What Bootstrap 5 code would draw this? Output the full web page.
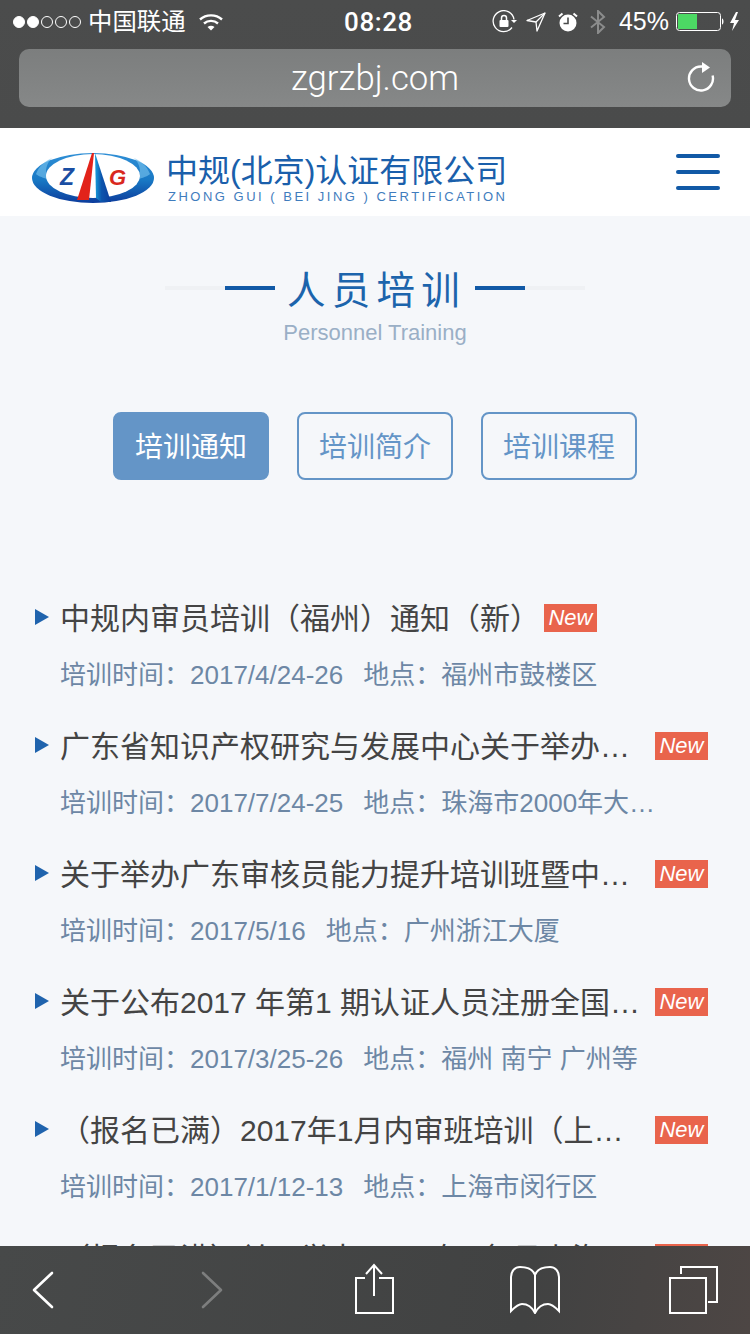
<!DOCTYPE html>
<html lang="zh-CN">
<head>
  <meta charset="UTF-8">
  <title>人员培训</title>
  <link href="https://cdn.jsdelivr.net/npm/bootstrap@5.3.3/dist/css/bootstrap.min.css" rel="stylesheet">
  <style>
    body {
      width: 750px;
      height: 1334px;
      overflow: hidden;
      background-color: #f5f7fa;
      font-family: "Liberation Sans", "Noto Sans CJK SC", sans-serif;
    }
    .phone { width: 750px; height: 1334px; }

    .safari-top { height: 128px; background: linear-gradient(180deg, #4b4c4c, #4a4b4b); color: #fff; }
    .status-row { height: 44px; padding: 0 8px 0 13px; display: grid; grid-template-columns: 1fr auto 1fr; align-items: center; font-size: 24px; }
    .dots { gap: 2px; }
    .dot { width: 12px; height: 12px; border: 1px solid #fff; border-radius: 50%; }
    .dot-on { background: #fff; }
    .carrier { margin-left: 7px; margin-right: 13px; line-height: 1; font-size: 24.4px; }
    .clock { font-family: Roboto, sans-serif; font-size: 26px; font-weight: 500; letter-spacing: .6px; margin-left: 2px; }
    .pct { font-size: 25px; margin: 0 7px 0 13px; }
    .url-box { height: 58px; margin: 5px 19px 0; padding: 0 16px 0 0; border-radius: 10px; background: linear-gradient(180deg, #7c7e7e, #868888); }
    .url-text { font-family: Roboto, sans-serif; font-weight: 300; font-size: 34.7px; line-height: 1; padding-left: 44px; }

    .site-head { height: 88px; background: #fff; padding: 0 30px 0 31px; }
    .logo-svg { margin-top: 12px; }
    .brand-text { margin-left: 9px; padding-top: 13px; }
    .brand-cn { font-size: 32px; line-height: 36px; font-weight: 400; color: #1a5fab; white-space: nowrap; }
    .brand-en { font-size: 13px; line-height: 14px; color: #3f7cbd; letter-spacing: 2.5px; white-space: nowrap; margin: 1px 0 0 2px; }
    .burger { width: 44px; gap: 12px; }
    .burger span { height: 4px; border-radius: 2px; background: #1159a6; }

    .page-body { min-height: 0; overflow: hidden; background: #f5f7fa; }
    .sec-title { margin-top: 50px; height: 44px; }
    .rule-light { width: 60px; height: 4px; background: #eff1f4; }
    .rule-blue { width: 50px; height: 4px; background: #1159a6; }
    .sec-name { font-size: 38.5px; line-height: 44px; padding-top: 6px; color: #1c64ac; letter-spacing: 6.2px; margin: 0 9px 0 12px; white-space: nowrap; }
    .sec-sub { font-size: 22px; line-height: 28px; color: #9aafc6; margin-top: 9px; }
    .tabs { margin-top: 65px; gap: 28px; }
    .tab-btn { width: 156px; height: 68px; padding: 3px 0 0; font-size: 28px; line-height: 1; border: 2px solid #6495c7; border-radius: 8px; color: #6495c7; background: transparent; }
    .tab-on { background: #6495c7; color: #fff; }

    .train-list { margin-top: 111px; padding: 0 42px 0 35px; }
    .train-item { height: 128px; }
    .tri { width: 0; height: 0; border-left: 14px solid #1f63ad; border-top: 8px solid transparent; border-bottom: 8px solid transparent; margin: 0 11px 4px 0; flex: none; }
    .item-top { height: 56px; }
    .item-title { font-size: 30px; line-height: 40px; color: #444; max-width: 585px; }
    .new-tag { flex: none; width: 53px; height: 28px; margin-left: 4px; margin-bottom: 2px; background: #e9644c; color: #fff; font-size: 22px; line-height: 28px; font-style: italic; text-align: center; }
    .item-meta { margin-left: 25px; width: 600px; font-size: 26px; line-height: 36px; color: #6d87a5; margin-top: 10px; }
    .item-meta span { margin-left: 20px; }

    .safari-bottom { height: 88px; flex: none; background: linear-gradient(100deg, #474949 0%, #414242 70%, #4d4644 100%); display: grid; grid-template-columns: 169px 162px 161px 158px 50px; padding-left: 18px; align-items: center; }
  </style>
</head>
<body>
<div class="phone d-flex flex-column">

  <div class="safari-top flex-shrink-0">
    <div class="status-row">
      <div class="d-flex align-items-center">
        <div class="dots d-flex">
          <div class="dot dot-on"></div><div class="dot dot-on"></div><div class="dot"></div><div class="dot"></div><div class="dot"></div>
        </div>
        <div class="carrier">中国联通</div>
        <svg width="24" height="18" viewBox="0 0 24 18" fill="none" stroke="#fff" stroke-width="2.4"><path d="M1 6.500C7 1 17 1 23 6.500"/><path d="M5 10.500C9 7 15 7 19 10.500"/><path d="M12 17.500L8.500 14C10.500 12.400 13.500 12.400 15.500 14Z" fill="#fff" stroke="none"/></svg>
      </div>
      <div class="clock">08:28</div>
      <div class="d-flex align-items-center justify-content-end">
        <svg class="me-1" width="26" height="24" viewBox="0 0 26 24" fill="none" stroke="#fff" stroke-width="1.300"><path d="M20 17.500A10.500 10.500 0 1 1 22 9.500"/><path d="M19 10h6l-3 3z" fill="#fff" stroke="none"/><rect x="7.500" y="10" width="9" height="7" rx="1" fill="#fff" stroke="none"/><path d="M9.500 10V8a2.500 2.500 0 0 1 5 0v2" stroke-width="1.500"/></svg>
        <svg class="ms-1 me-2" width="20" height="20" viewBox="0 0 20 20" fill="none" stroke="#fff" stroke-width="1.300"><path d="M19 1L1 8.500l9 1.500 1 9z" stroke-linejoin="round"/><path d="M19 1L10 10"/></svg>
        <svg class="ms-1 me-2" width="20" height="20" viewBox="0 0 20 20" fill="#fff"><circle cx="10" cy="11" r="8.500"/><path d="M10 5.500V11.500H5.500" fill="none" stroke="#4a4b4b" stroke-width="1.600"/><path d="M1 4.500L4.500 1.500M19 4.500L15.500 1.500" stroke="#fff" stroke-width="2"/></svg>
        <svg class="ms-1" width="16" height="24" viewBox="0 0 16 24" fill="none" stroke="#8b8c8c" stroke-width="2"><path d="M1 6.500L14 17 8 23V1l6 6L1 17.500"/></svg>
        <div class="pct">45%</div>
        <svg width="66" height="20" viewBox="0 0 66 20"><rect x=".5" y=".5" width="44" height="18" rx="3" fill="none" stroke="#fff"/><rect x="2" y="2" width="19" height="15" fill="#4cd964"/><path d="M46 6.500c2 0 2 6 0 6z" fill="#fff"/><path d="M60 0l-6 11h4l-2 8 7-11h-4l3-8z" fill="#fff"/></svg>
      </div>
    </div>
    <div class="url-box d-flex align-items-center">
      <div class="url-text flex-grow-1 text-center">zgrzbj.com</div>
      <svg width="28" height="32" viewBox="0 0 28 32" fill="none" stroke="#fff" stroke-width="2.400"><path d="M25.600 13.500A12 12 0 1 1 14 4.500H16"/><path d="M15 0l8 5.500-8 5.500z" fill="#fff" stroke="none"/></svg>
    </div>
  </div>

  <div class="site-head d-flex align-items-center flex-shrink-0">
    <svg class="logo-svg" width="126" height="56" viewBox="0 0 126 56">
      <defs>
        <linearGradient id="ringGrad" x1="0" y1="0" x2="0" y2="1">
          <stop offset="0" stop-color="#2f8fd6"/><stop offset=".55" stop-color="#1878c4"/><stop offset="1" stop-color="#0c3c9c"/>
        </linearGradient>
        <linearGradient id="spikeGrad" x1="0" y1="0" x2="1" y2="0">
          <stop offset="0" stop-color="#18a0dc"/><stop offset=".4" stop-color="#0c55ad"/><stop offset="1" stop-color="#0b3d9c"/>
        </linearGradient>
      </defs>
      <ellipse cx="62" cy="28" rx="61" ry="25" fill="url(#ringGrad)"/>
      <path d="M5 24C8 16 14 11 21 8 15 14 14 20 16 29 10 27 7 26 5 24Z" fill="#7cc4ee" opacity=".6"/>
      <path d="M119 24C116 16 110 11 103 8 109 14 110 20 108 29 114 27 117 26 119 24Z" fill="#7cc4ee" opacity=".6"/>
      <ellipse cx="62" cy="26" rx="47" ry="22" fill="#fff"/>
      <path d="M61 3L63 3 58 50 46 50Z" fill="#e2231a"/>
      <path d="M64 3L80 52 70 52 65 48Z" fill="url(#spikeGrad)"/>
      <text x="29" y="35" font-size="23" font-weight="700" font-style="italic" fill="#1a4ea3" font-family="Liberation Sans, sans-serif">Z</text>
      <text x="78" y="35" font-size="22" font-weight="700" font-style="italic" fill="#d9281e" font-family="Liberation Sans, sans-serif">G</text>
    </svg>
    <div class="brand-text">
      <div class="brand-cn">中规(北京)认证有限公司</div>
      <div class="brand-en">ZHONG GUI ( BEI JING ) CERTIFICATION</div>
    </div>
    <div class="burger d-flex flex-column ms-auto"><span></span><span></span><span></span></div>
  </div>

  <div class="page-body flex-grow-1">
    <div class="sec-title d-flex align-items-center justify-content-center">
      <div class="rule-light"></div><div class="rule-blue"></div>
      <div class="sec-name">人员培训</div>
      <div class="rule-blue"></div><div class="rule-light"></div>
    </div>
    <div class="sec-sub text-center">Personnel Training</div>

    <div class="tabs d-flex justify-content-center">
      <button class="btn tab-btn tab-on" type="button">培训通知</button>
      <button class="btn tab-btn" type="button">培训简介</button>
      <button class="btn tab-btn" type="button">培训课程</button>
    </div>

    <div class="train-list">
      <div class="train-item">
        <div class="item-top d-flex align-items-center"><i class="tri"></i><div class="item-title text-truncate">中规内审员培训（福州）通知（新）</div><div class="new-tag">New</div></div>
        <div class="item-meta text-truncate">培训时间：2017/4/24-26<span>地点：福州市鼓楼区</span></div>
      </div>
      <div class="train-item">
        <div class="item-top d-flex align-items-center"><i class="tri"></i><div class="item-title text-truncate">广东省知识产权研究与发展中心关于举办培训班的通知</div><div class="new-tag ms-auto">New</div></div>
        <div class="item-meta text-truncate">培训时间：2017/7/24-25<span>地点：珠海市2000年大酒店</span></div>
      </div>
      <div class="train-item">
        <div class="item-top d-flex align-items-center"><i class="tri"></i><div class="item-title text-truncate">关于举办广东审核员能力提升培训班暨中规认证研讨会</div><div class="new-tag ms-auto">New</div></div>
        <div class="item-meta text-truncate">培训时间：2017/5/16<span>地点：广州浙江大厦</span></div>
      </div>
      <div class="train-item">
        <div class="item-top d-flex align-items-center"><i class="tri"></i><div class="item-title text-truncate">关于公布2017 年第1 期认证人员注册全国统一考试</div><div class="new-tag ms-auto">New</div></div>
        <div class="item-meta text-truncate">培训时间：2017/3/25-26<span>地点：福州 南宁 广州等</span></div>
      </div>
      <div class="train-item">
        <div class="item-top d-flex align-items-center"><i class="tri"></i><div class="item-title text-truncate">（报名已满）2017年1月内审班培训（上海）通知</div><div class="new-tag ms-auto">New</div></div>
        <div class="item-meta text-truncate">培训时间：2017/1/12-13<span>地点：上海市闵行区</span></div>
      </div>
      <div class="train-item">
        <div class="item-top d-flex align-items-center"><i class="tri"></i><div class="item-title text-truncate">（报名已满）关于举办2017 年（1月上海）通知</div><div class="new-tag ms-auto">New</div></div>
      </div>
    </div>
  </div>

  <div class="safari-bottom">
    <svg width="50" height="40" viewBox="0 0 50 40" fill="none" stroke="#fff" stroke-width="2.600" stroke-linecap="round" stroke-linejoin="round"><path d="M34 3L16 20 34 37"/></svg>
    <svg width="50" height="40" viewBox="0 0 50 40" fill="none" stroke="#7d7e7e" stroke-width="2.600" stroke-linecap="round" stroke-linejoin="round"><path d="M16 3L34 20 16 37"/></svg>
    <svg width="50" height="54" viewBox="0 0 50 54" fill="none" stroke="#fff" stroke-width="2"><path d="M16 15H7V50H44V15H30"/><path d="M25 33V2M17 11L25 2 33 11"/></svg>
    <svg width="50" height="48" viewBox="0 0 50 48" fill="none" stroke="#fff" stroke-width="2"><path d="M25 47V9C23 3 16 1 10 1 5 1 1 5 1 11V45C5 41 8 38 12 38 17 38 22 41 25 47 28 41 33 38 38 38 42 38 45 41 49 45V11C49 5 45 1 40 1 34 1 27 3 25 9"/></svg>
    <svg width="50" height="48" viewBox="0 0 50 48" fill="none" stroke="#fff" stroke-width="2"><rect x="2" y="12" width="36" height="35"/><path d="M13 8V1H49V36H40"/></svg>
  </div>
</div>
</body>
</html>
